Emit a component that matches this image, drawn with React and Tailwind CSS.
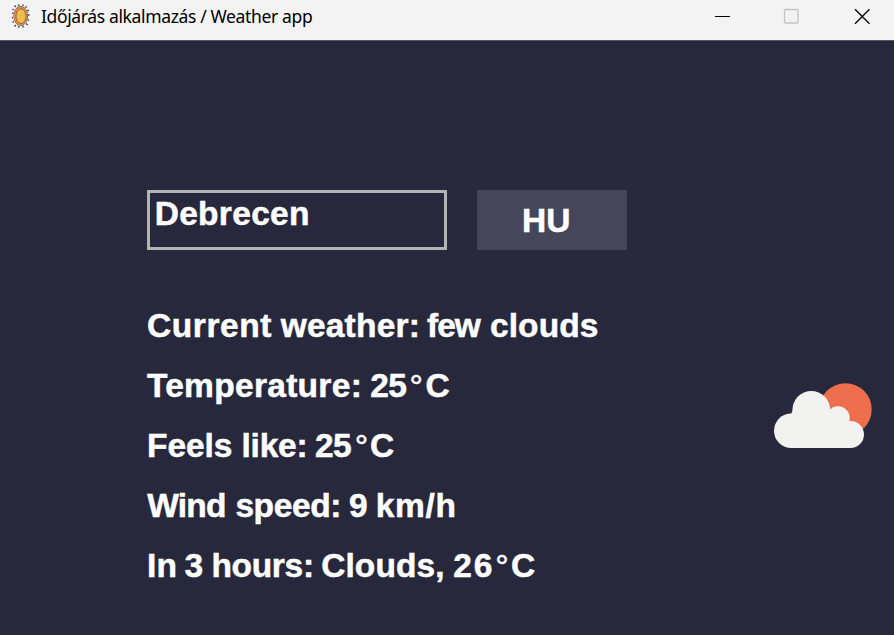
import React from "react";

const HEADING =
  "font-['Liberation_Sans',Arial,sans-serif] font-bold text-[33.5px] text-white whitespace-pre [-webkit-text-stroke:0.5px_white]";

// Each word carries its advance width and tracking.
const lines = [
  [
    ["Current", "w-[133.8px] tracking-[0.6px]"],
    ["weather:", "w-[146.4px] tracking-[0.2px]"],
    ["few", "w-[62.9px] tracking-[-1.1px]"],
    ["clouds", "tracking-[0.1px]"],
  ],
  [
    ["Temperature:", "w-[223.3px] tracking-[0.3px]"],
    ["25", "w-[39.2px] tracking-[-0.6px]"],
    ["°", "w-[16px]"],
    ["C", ""],
  ],
  [
    ["Feels", "ml-[0.2px] w-[94.4px] tracking-[-0.1px]"],
    ["like:", "w-[73.6px] tracking-[-0.2px]"],
    ["25", "w-[39.6px] tracking-[-0.6px]"],
    ["°", "w-[15.4px]"],
    ["C", ""],
  ],
  [
    ["Wind", "ml-[0.4px] w-[88.1px] tracking-[-0.8px]"],
    ["speed:", "w-[113.7px] tracking-[-0.4px]"],
    ["9", "w-[26.6px]"],
    ["km/h", "tracking-[0.7px]"],
  ],
  [
    ["In", "w-[37.7px] tracking-[0.4px]"],
    ["3", "w-[26.8px]"],
    ["hours:", "w-[109.8px] tracking-[-0.3px]"],
    ["Clouds,", "w-[132.2px] tracking-[0.1px]"],
    ["26", "w-[41.8px] tracking-[1.8px]"],
    ["°", "w-[15.9px]"],
    ["C", ""],
  ],
];

function Word({ text, spacing }) {
  const degree = text === "°" ? " font-normal relative top-[1px]" : "";
  return <span className={"block shrink-0 " + spacing + degree}>{text}</span>;
}

function BugIcon() {
  return (
    <svg className="ml-[11px] h-6 w-5 shrink-0" viewBox="0 0 20 24">
      <path
        d="M5 3L3.500 1.500M8 2L7.500 0.300M11.500 2L12.500 0.500M14 3.500L16 2.500M16 7L18 6.200M17 11H18.500M16.500 15.500L18 16.500M15 19.500L16.800 21M11.500 21.500L12.500 23.500M8 22L7.500 23.700M5 21L3.500 22.500M3 17.500L1.500 18.500M2 13.500L0.800 13.800M2.500 9.500L1 8.800M3 6L1.500 5"
        stroke="#423b6e"
        strokeWidth="1.3"
      />
      <ellipse cx="9.700" cy="12" rx="7.300" ry="10" fill="#4a3d63" />
      <ellipse cx="9.700" cy="12" rx="6.900" ry="9.500" fill="#e0913f" />
      <ellipse cx="10" cy="12.200" rx="5" ry="7.300" fill="#e9c04f" stroke="#8d5434" strokeWidth="0.8" />
    </svg>
  );
}

function TitleBar() {
  return (
    <header className="flex h-[41px] shrink-0 items-start border-b border-[#55556a] bg-[#f3f3f3]">
      <div className="flex h-8 items-center">
        <BugIcon />
        <h1 className="ml-[10px] mt-px whitespace-nowrap font-['Noto_Sans','Open_Sans',sans-serif] text-[17.5px] tracking-[-0.36px] text-black">
          Időjárás alkalmazás / Weather app
        </h1>
      </div>
      <div className="ml-auto flex h-8 items-center pr-[24px]">
        <svg className="h-4 w-4" viewBox="0 0 16 16">
          <path d="M1 8.500H16" stroke="#000" strokeWidth="1" />
        </svg>
        <svg className="ml-[53px] h-4 w-4" viewBox="0 0 16 16">
          <rect x="1.500" y="1.500" width="13.500" height="13.500" rx="1" fill="none" stroke="#c4c4c4" strokeWidth="1.300" />
        </svg>
        <svg className="ml-[55px] h-4 w-4" viewBox="0 0 16 16">
          <path d="M1 1.200L15.500 15.700M15.500 1.200L1 15.700" stroke="#111" strokeWidth="1.500" />
        </svg>
      </div>
    </header>
  );
}

function FewClouds() {
  return (
    <svg className="mt-[86px] h-[68px] w-[100px]" viewBox="0 0 100 68">
      <circle cx="72.500" cy="27.400" r="26.200" fill="#ec6e4c" />
      <g fill="#f2f2f0">
        <circle cx="18.300" cy="48.800" r="17.300" />
        <circle cx="38.300" cy="27.900" r="18.900" />
        <circle cx="65" cy="36" r="11.700" />
        <circle cx="77.500" cy="52.500" r="13.500" />
        <path d="M18 32L20 28H57L70 42L78 50V66H18Z" />
      </g>
    </svg>
  );
}

export default function App() {
  return (
    <div className="flex h-[635px] w-[894px] flex-col overflow-hidden bg-[#28283c]">
      <TitleBar />
      <main className="flex flex-1 flex-col pt-[149px]">
        <div className="ml-[147px] flex gap-[30px]">
          <div className={"h-[60px] w-[300px] border-[3px] border-[#b4b4b4] pl-[4.700px] leading-[42px] tracking-[0.3px] " + HEADING}>
            Debrecen
          </div>
          <button className={"h-[60px] w-[150px] bg-[#46465a] pl-[45px] pt-[2px] text-left leading-[58px] " + HEADING}>
            HU
          </button>
        </div>
        <div className="mt-[46px] flex justify-between pl-[146.900px] pr-[21px]">
          <div>
            {lines.map((words, i) => (
              <div key={i} className={"flex h-[60px] leading-[60px] " + HEADING}>
                {words.map(([text, spacing], j) => (
                  <Word key={j} text={text} spacing={spacing} />
                ))}
              </div>
            ))}
          </div>
          <FewClouds />
        </div>
      </main>
    </div>
  );
}
